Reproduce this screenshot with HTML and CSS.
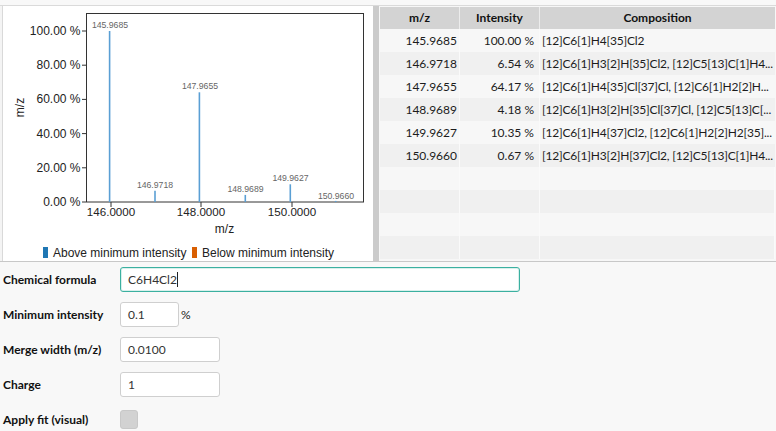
FILE: index.html
```html
<!DOCTYPE html>
<html>
<head>
<meta charset="utf-8">
<link rel="stylesheet" href="styles.css">
</head>
<body>
<div class="app">
  <div class="top">
    <div class="chart-pane">
      <svg class="chart" width="370" height="255" viewBox="3 6 370 255" xmlns="http://www.w3.org/2000/svg">
        <rect class="plot-box" x="86.5" y="13.5" width="277" height="188.5"/>
        <g class="ticks">
          <line x1="82" y1="202" x2="86" y2="202"/>
          <line x1="82" y1="167.8" x2="86" y2="167.8"/>
          <line x1="82" y1="133.6" x2="86" y2="133.6"/>
          <line x1="82" y1="99.4" x2="86" y2="99.4"/>
          <line x1="82" y1="65.2" x2="86" y2="65.2"/>
          <line x1="82" y1="31" x2="86" y2="31"/>
          <line x1="111" y1="202" x2="111" y2="207"/>
          <line x1="201" y1="202" x2="201" y2="207"/>
          <line x1="292" y1="202" x2="292" y2="207"/>
        </g>
        <g class="ylabels">
          <text x="80.5" y="206">0.00 %</text>
          <text x="80.5" y="171.8">20.00 %</text>
          <text x="80.5" y="137.6">40.00 %</text>
          <text x="80.5" y="103.4">60.00 %</text>
          <text x="80.5" y="69.2">80.00 %</text>
          <text x="80.5" y="35">100.00 %</text>
        </g>
        <g class="xlabels">
          <text x="111" y="216">146.0000</text>
          <text x="201" y="216">148.0000</text>
          <text x="292" y="216">150.0000</text>
        </g>
        <text class="axis-title" x="224.5" y="233">m/z</text>
        <text class="axis-title" x="24" y="107.5" transform="rotate(-90 24 107.5)">m/z</text>
        <g class="peaks">
          <line x1="109.6" y1="202" x2="109.6" y2="31"/>
          <line x1="155" y1="202" x2="155" y2="190.8"/>
          <line x1="199.4" y1="202" x2="199.4" y2="92.3"/>
          <line x1="245.3" y1="202" x2="245.3" y2="194.9"/>
          <line x1="290.3" y1="202" x2="290.3" y2="184.3"/>
          <line x1="335.7" y1="202" x2="335.7" y2="200.9"/>
        </g>
        <g class="peak-labels">
          <text x="110" y="28">145.9685</text>
          <text x="155" y="188">146.9718</text>
          <text x="200" y="89">147.9655</text>
          <text x="245.5" y="192">148.9689</text>
          <text x="290.5" y="181">149.9627</text>
          <text x="336" y="198.5">150.9660</text>
        </g>
        <rect class="legend-above" x="43" y="247" width="5" height="11"/>
        <text class="legend-text" x="53" y="257">Above minimum intensity</text>
        <rect class="legend-below" x="192" y="247" width="5" height="11"/>
        <text class="legend-text" x="202" y="257">Below minimum intensity</text>
      </svg>
    </div>
    <div class="splitter"></div>
    <div class="table">
      <div class="row head">
        <div class="cell">m/z</div>
        <div class="cell">Intensity</div>
        <div class="cell">Composition</div>
      </div>
      <div class="row odd">
        <div class="cell num c1">145.9685</div>
        <div class="cell num c2">100.00 %</div>
        <div class="cell comp">[12]C6[1]H4[35]Cl2</div>
      </div>
      <div class="row even">
        <div class="cell num c1">146.9718</div>
        <div class="cell num c2">6.54 %</div>
        <div class="cell comp">[12]C6[1]H3[2]H[35]Cl2, [12]C5[13]C[1]H4...</div>
      </div>
      <div class="row odd">
        <div class="cell num c1">147.9655</div>
        <div class="cell num c2">64.17 %</div>
        <div class="cell comp">[12]C6[1]H4[35]Cl[37]Cl, [12]C6[1]H2[2]H...</div>
      </div>
      <div class="row even">
        <div class="cell num c1">148.9689</div>
        <div class="cell num c2">4.18 %</div>
        <div class="cell comp">[12]C6[1]H3[2]H[35]Cl[37]Cl, [12]C5[13]C[...</div>
      </div>
      <div class="row odd">
        <div class="cell num c1">149.9627</div>
        <div class="cell num c2">10.35 %</div>
        <div class="cell comp">[12]C6[1]H4[37]Cl2, [12]C6[1]H2[2]H2[35]...</div>
      </div>
      <div class="row even">
        <div class="cell num c1">150.9660</div>
        <div class="cell num c2">0.67 %</div>
        <div class="cell comp">[12]C6[1]H3[2]H[37]Cl2, [12]C5[13]C[1]H4...</div>
      </div>
      <div class="row odd"><div class="cell"></div><div class="cell"></div><div class="cell"></div></div>
      <div class="row even"><div class="cell"></div><div class="cell"></div><div class="cell"></div></div>
      <div class="row odd"><div class="cell"></div><div class="cell"></div><div class="cell"></div></div>
      <div class="row even"><div class="cell"></div><div class="cell"></div><div class="cell"></div></div>
    </div>
  </div>
  <div class="form">
    <div class="field">
      <label class="label">Chemical formula</label>
      <div class="input formula focused">C6H4Cl2<span class="caret"></span></div>
    </div>
    <div class="field">
      <label class="label">Minimum intensity</label>
      <div class="input small">0.1</div>
      <span class="unit">%</span>
    </div>
    <div class="field">
      <label class="label">Merge width (m/z)</label>
      <div class="input medium">0.0100</div>
    </div>
    <div class="field">
      <label class="label">Charge</label>
      <div class="input medium">1</div>
    </div>
    <div class="field">
      <label class="label">Apply fit (visual)</label>
      <div class="checkbox"></div>
    </div>
  </div>
</div>
</body>
</html>
```
FILE: styles.css
```css
html, body {
  margin: 0;
  padding: 0;
}
body {
  background: #f8f8f8;
  font-family: "Lato", "Noto Sans", sans-serif;
  color: #111;
}
.app {
  width: 776px;
  height: 431px;
  overflow: hidden;
}
.top {
  margin-top: 5px;
  height: 255px;
  border-top: 1px solid #dadada;
  border-bottom: 1px solid #c8c8c8;
  padding-left: 2px;
  display: flex;
  background: #f4f4f4;
}
.chart-pane {
  width: 370px;
  border-left: 1px solid #d9d9d9;
  background: #fff;
  flex: none;
}
.chart {
  display: block;
}
.plot-box {
  fill: none;
  stroke: #333;
  stroke-width: 1;
}
.ticks line {
  stroke: #333;
  stroke-width: 1;
}
.ylabels text {
  font: 12px "Liberation Sans", Arial, sans-serif;
  fill: #222;
  text-anchor: end;
}
.xlabels text {
  font: 11.6px "Liberation Sans", Arial, sans-serif;
  fill: #222;
  text-anchor: middle;
}
.axis-title {
  font: 12px "Liberation Sans", Arial, sans-serif;
  fill: #222;
  text-anchor: middle;
}
.peaks line {
  stroke: #5a9fd4;
  stroke-width: 1.6;
}
.peak-labels text {
  font: 8.7px "Liberation Sans", Arial, sans-serif;
  fill: #666;
  text-anchor: middle;
}
.legend-above { fill: #1f77b4; }
.legend-below { fill: #d95f02; }
.legend-text {
  font: 12px "Liberation Sans", Arial, sans-serif;
  fill: #222;
}
.splitter {
  width: 6px;
  background: #cbcbcb;
  flex: none;
}
.table {
  flex: 1;
  padding: 1px 1px 0 1px;
  background: #f7f7f7;
  overflow: hidden;
}
.row {
  display: grid;
  grid-template-columns: 80px 80px 1fr;
  height: 23px;
}
.row.head {
  height: 22px;
  background: #d3d3d3;
}
.row.odd { background: #f7f7f7; }
.row.even { background: #f0f0f0; }
.cell {
  border-right: 1px solid #fafafa;
  font-size: 12px;
  line-height: 23px;
  white-space: nowrap;
  overflow: hidden;
  color: #1c1c1c;
}
.head .cell {
  border-right: 1px solid #ececec;
  font-weight: 700;
  text-align: center;
  line-height: 22px;
  color: #111;
}
.head .cell:last-child { border-right: none; }
.cell.num { text-align: right; }
.cell.c1 { padding-right: 2px; }
.cell.c2 { padding-right: 5px; }
.cell.comp {
  padding-left: 2px;
  border-right: none;
  letter-spacing: -0.2px;
}
.form {
  padding: 5px 0 0 3px;
  display: flex;
  flex-direction: column;
  gap: 10px;
}
.field {
  display: flex;
  align-items: center;
  height: 25px;
}
.label {
  width: 117px;
  flex: none;
  font-weight: 700;
  font-size: 12px;
  color: #111;
}
.input {
  box-sizing: border-box;
  height: 25px;
  border: 1px solid #cfcfcf;
  border-radius: 3px;
  background: #fff;
  padding-left: 7px;
  font-size: 12px;
  line-height: 23px;
  color: #333;
}
.input.formula { width: 400px; }
.input.small { width: 59px; }
.input.medium { width: 100px; }
.input.focused {
  border: 1px solid #3bb0a0;
  box-shadow: inset 0 0 0 1px #d8f0ec;
}
.caret {
  display: inline-block;
  width: 1px;
  height: 15px;
  background: #222;
  vertical-align: -3px;
}
.unit {
  font-size: 12px;
  color: #222;
  margin-left: 2px;
}
.checkbox {
  width: 18px;
  height: 19px;
  border-radius: 3px;
  background: #d2d2d2;
  border: 1px solid #c8c8c8;
  box-sizing: border-box;
}
```
